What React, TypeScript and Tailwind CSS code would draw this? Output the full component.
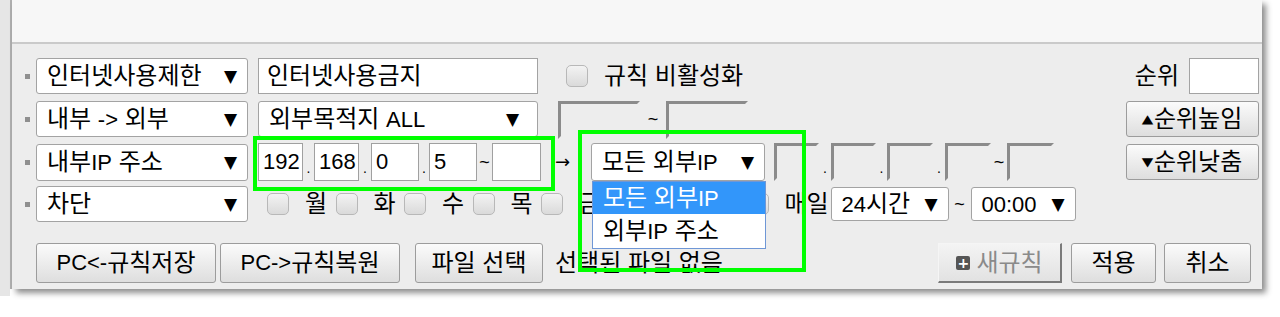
import React from "react";

const Bullet = () => <span className="w-[5px] h-[5px] bg-[#8f8f8f] mr-[6px] shrink-0" />;

// Latin runs in the reference are a touch smaller than the hangul
const L = ({ children }: { children: React.ReactNode }) => <span className="text-[22px]">{children}</span>;

function Select({ label, w, h = "h-[36px]", extra = "" }: { label: React.ReactNode; w: string; h?: string; extra?: string }) {
  return (
    <div className={`${w} ${h} shrink-0 bg-white border border-[#a3a3a3] rounded-[3px] flex items-center justify-between pl-[10px] pr-[10px] ${extra}`}>
      <span className="whitespace-nowrap">{label}</span>
      <span className="text-[17px] font-['DejaVu_Sans',sans-serif]">▼</span>
    </div>
  );
}

function Btn({ children, w, extra = "" }: { children: React.ReactNode; w: string; extra?: string }) {
  return (
    <div className={`${w} h-full shrink-0 flex items-center justify-center rounded-[3px] border border-[#9c9c9c] bg-gradient-to-b from-[#fbfbfb] to-[#dedede] whitespace-nowrap ${extra}`}>
      {children}
    </div>
  );
}

const Check = ({ extra = "" }: { extra?: string }) => (
  <div className={`w-[22px] h-[22px] shrink-0 rounded-[5px] border border-[#b8b8b8] bg-gradient-to-b from-[#f3f3f3] to-[#dadada] ${extra}`} />
);

const Inset = ({ w, extra = "" }: { w: string; extra?: string }) => (
  <div className={`${w} h-[38px] shrink-0 border-[3px] border-t-[#8b8b8b] border-l-[#8b8b8b] border-r-[#ededed] border-b-[#ededed] self-start ${extra}`} />
);

const IpBox = ({ w, v, extra = "" }: { w: string; v?: string; extra?: string }) => (
  <div className={`${w} h-[38px] shrink-0 bg-white border border-[#a0a0a0] flex items-center pl-[4px] text-[22px] ${extra}`}>{v}</div>
);

const Dot = ({ w }: { w: string }) => <span className={`${w} shrink-0 text-center text-[14px] self-end pb-[6px]`}>.</span>;

const Tri = ({ c }: { c: string }) => (
  <span className="text-[12px] mr-[2px] font-['DejaVu_Sans',sans-serif] scale-x-125 inline-block">{c}</span>
);

export default function App() {
  const days = ["월", "화", "수", "목", "금", "토", "일"];
  return (
    <div className="relative w-[1280px] h-[317px] bg-white overflow-hidden text-[24px] text-black font-['Liberation_Sans','Noto_Sans_CJK_KR',sans-serif] leading-none">
      <div className="flex">
        <div className="w-[10px] h-[296px] bg-[#e6e6e6] shrink-0" />
        <div className="w-[2px] h-[289px] bg-[#b0b0b0] shrink-0" />
        <div className="w-[1250px] h-[289px] bg-[#ededed] shadow-[4px_4px_6px_rgba(0,0,0,0.45)] flex flex-col">
          {/* header strip */}
          <div className="h-[44px] bg-[#f7f7f7] border-b-2 border-[#cacaca] shrink-0" />

          {/* row 1 */}
          <div className="mt-[14px] h-[36px] flex items-center pl-[13px] pr-[3px]">
            <Bullet />
            <Select label="인터넷사용제한" w="w-[212px]" />
            <div className="ml-[10px] w-[280px] h-full bg-white border border-[#a3a3a3] flex items-center pl-[8px]">인터넷사용금지</div>
            <Check extra="ml-[28px]" />
            <span className="ml-[16px] whitespace-nowrap">규칙 비활성화</span>
            <div className="flex-1" />
            <span>순위</span>
            <div className="ml-[10px] w-[70px] h-full bg-white border border-[#a3a3a3]" />
          </div>

          {/* row 2 */}
          <div className="mt-[7px] h-[36px] flex items-center pl-[13px] pr-[3px]">
            <Bullet />
            <Select label={<>내부 <L>-&gt;</L> 외부</>} w="w-[212px]" />
            <Select label={<>외부목적지 <L>ALL</L></>} w="w-[280px]" extra="ml-[10px] pr-[18px]" />
            <Inset w="w-[82px]" extra="ml-[20px]" />
            <span className="w-[26px] text-center text-[18px]">~</span>
            <Inset w="w-[82px]" />
            <div className="flex-1" />
            <Btn w="w-[133px]"><Tri c="▲" />순위높임</Btn>
          </div>

          {/* row 3 */}
          <div className="mt-[6px] h-[38px] flex items-center pl-[13px] pr-[3px]">
            <Bullet />
            <Select label={<>내부<L>IP</L> 주소</>} w="w-[212px]" h="h-[37px]" />
            <IpBox w="w-[45px]" v="192" extra="ml-[10px]" />
            <Dot w="w-[11px]" />
            <IpBox w="w-[45px]" v="168" />
            <Dot w="w-[12px]" />
            <IpBox w="w-[48px]" v="0" />
            <Dot w="w-[10px]" />
            <IpBox w="w-[48px]" v="5" />
            <span className="w-[15px] text-center text-[18px]">~</span>
            <IpBox w="w-[49px]" />
            <span className="ml-[14px] w-[22px] text-[18px] font-['DejaVu_Sans',sans-serif]">→</span>
            <Select label={<>모든 외부<L>IP</L></>} w="w-[174px]" h="h-[38px]" extra="ml-[14px] border-[#5b8fd6] pr-[10px]" />
            <Inset w="w-[45px]" extra="ml-[9px]" />
            <Dot w="w-[12px]" />
            <Inset w="w-[45px]" />
            <Dot w="w-[11px]" />
            <Inset w="w-[46px]" />
            <Dot w="w-[12px]" />
            <Inset w="w-[46px]" />
            <span className="w-[16px] text-center text-[18px]">~</span>
            <Inset w="w-[47px]" />
            <div className="flex-1" />
            <div className="h-[36px]">
              <Btn w="w-[133px]"><Tri c="▼" />순위낮춤</Btn>
            </div>
          </div>

          {/* row 4 */}
          <div className="mt-[5px] h-[36px] flex items-center pl-[13px] pr-[3px]">
            <Bullet />
            <Select label="차단" w="w-[212px]" />
            <span className="ml-[19px]" />
            {days.map((d) => (
              <div key={d} className="flex items-center">
                <Check />
                <span className="w-[46.5px] pl-[16px]">{d}</span>
              </div>
            ))}
            <Check />
            <span className="ml-[16px] w-[46px] whitespace-nowrap">매일</span>
            <Select label={<><L>24</L>시간</>} w="w-[118px]" h="h-[34px]" extra="pl-[4px]" />
            <span className="w-[22px] text-center text-[18px]">~</span>
            <Select label={<L>00:00</L>} w="w-[105px]" h="h-[34px]" extra="pl-[8px]" />
          </div>

          {/* row 5 */}
          <div className="mt-[21px] h-[40px] flex items-center pl-[24px] pr-[11px]">
            <Btn w="w-[180px]"><L>PC&lt;-</L>규칙저장</Btn>
            <Btn w="w-[180px]" extra="ml-[4px]"><L>PC-&gt;</L>규칙복원</Btn>
            <Btn w="w-[128px]" extra="ml-[15px]">파일 선택</Btn>
            <span className="ml-[12px] whitespace-nowrap">선택된 파일 없음</span>
            <div className="flex-1" />
            <div className="w-[124px] h-full flex items-center justify-center border border-t-[#f5f5f5] border-l-[#f5f5f5] border-r-[#7a7a7a] border-b-[#7a7a7a] border-r-2 border-b-2 bg-gradient-to-b from-[#f4f4f4] to-[#e2e2e2] text-[#8a8a8a]">
              <span className="w-[14px] h-[14px] bg-[#555] rounded-[2px] flex items-center justify-center text-white text-[14px] font-bold mr-[6px] font-['DejaVu_Sans',sans-serif]">+</span>
              <span>새규칙</span>
            </div>
            <Btn w="w-[85px]" extra="ml-[9px]">적용</Btn>
            <Btn w="w-[87px]" extra="ml-[8px]">취소</Btn>
          </div>
        </div>
      </div>

      {/* open dropdown list */}
      <div className="absolute left-[592px] top-[181px] w-[174px] h-[68px] bg-white border border-[#6f97d6] flex flex-col">
        <div className="h-[32px] bg-[#3296fa] text-white flex items-center pl-[10px]">
          <span>모든 외부<L>IP</L></span>
        </div>
        <div className="flex-1 flex items-center pl-[10px]">
          <span>외부<L>IP</L> 주소</span>
        </div>
      </div>

      {/* annotation outlines */}
      <div className="absolute left-[253px] top-[136px] w-[302px] h-[55px] border-4 border-[#00ff00]" />
      <div className="absolute left-[578px] top-[130px] w-[228px] h-[142px] border-4 border-[#00ff00]" />
    </div>
  );
}
